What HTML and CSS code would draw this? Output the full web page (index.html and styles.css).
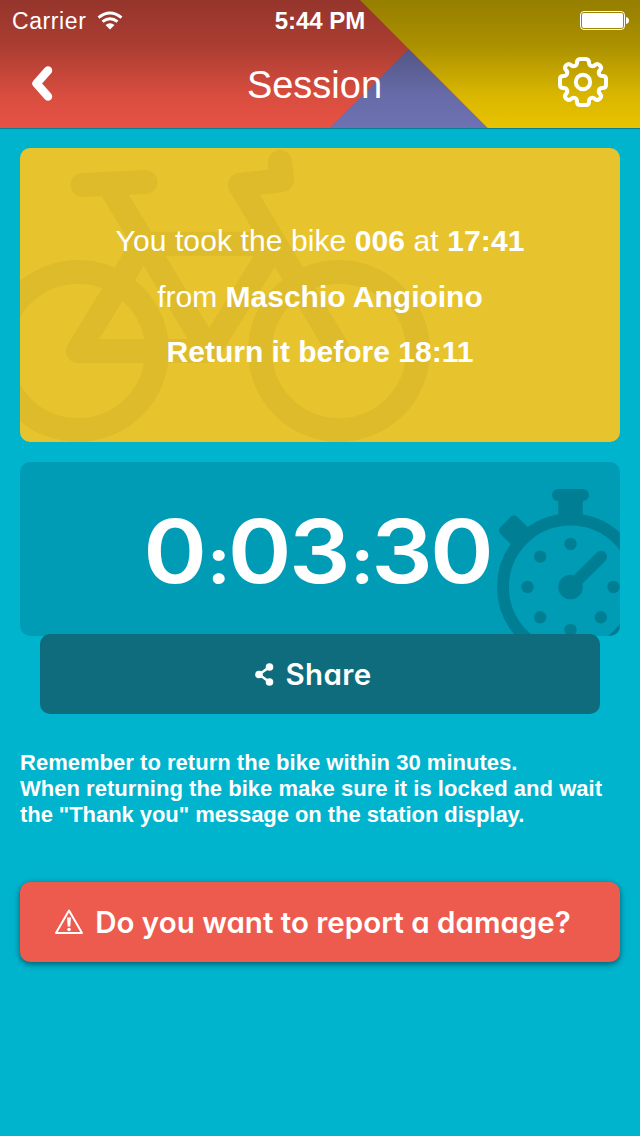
FILE: index.html
```html
<!DOCTYPE html>
<html lang="en">
    <head>
        <meta charset="UTF-8">
        <meta name="viewport" content="width=device-width, initial-scale=1.0">
        <title>Session</title>
        <link rel="stylesheet" href="styles.css">
    </head>
    <body>
        <header class="header">
            <svg class="header-bg" viewBox="0 0 640 128">
                <rect width="640" height="128" fill="#e95344"/>
                <path d="M360 0H640V128H487.500Z" fill="#eac500"/>
                <path d="M408.500 49L487.500 128H329.500Z" fill="#6f73b4"/>
            </svg>
            <div class="status-bar">
                <div class="carrier">
                    <span class="carrier-name">Carrier</span>
                    <svg class="wifi" width="26" height="19" viewBox="0 0 26 19">
                        <g fill="none" stroke="#fff" stroke-width="3">
                            <path d="M1.500 6.700Q13 -2.700 24.500 6.700"/>
                            <path d="M5.500 10.700Q13 4.700 20.500 10.700"/>
                        </g>
                        <path d="M8.500 14Q13 10.400 17.500 14L13 18.500Z" fill="#fff"/>
                    </svg>
                </div>
                <span class="clock">5:44 PM</span>
                <svg class="battery" width="50" height="20" viewBox="0 0 50 20">
                    <rect x="0.500" y="0.500" width="44" height="18" rx="3.500" fill="none" stroke="#fff"/>
                    <rect x="2" y="2" width="41" height="15" rx="2" fill="#fff"/>
                    <path d="M46 6Q49 6.500 49 9.500T46 13Z" fill="#fff"/>
                </svg>
            </div>
            <nav class="nav-bar">
                <svg class="back" width="26" height="40" viewBox="0 0 26 40">
                    <path d="M19 6.500L7.500 19.500L19 32.500" fill="none" stroke="#fff" stroke-width="8.500" stroke-linecap="round" stroke-linejoin="round"/>
                </svg>
                <h1 class="title">Session</h1>
                <svg class="gear" width="52" height="52" viewBox="-26 -26 52 52">
                    <g fill="none" stroke="#fff" stroke-width="4" stroke-linejoin="round">
                        <path d="M-3 -23H3Q6 -22.500 6 -19.500C6 -16 9.500 -14.500 12 -17Q14.200 -19 16.400 -17L17.400 -16Q19 -14 17 -12C14.500 -9.500 16 -6 19.500 -6Q23 -6 23 -3V3Q23 6 19.500 6C16 6 14.500 9.500 17 12Q19 14 17.400 16L16.400 17Q14.200 19 12 17C9.500 14.500 6 16 6 19.500Q6 23 3 23H-3Q-6 23 -6 19.500C-6 16 -9.500 14.500 -12 17Q-14.200 19 -16.400 17L-17.400 16Q-19 14 -17 12C-14.500 9.500 -16 6 -19.500 6Q-23 6 -23 3V-3Q-23 -6 -19.500 -6C-16 -6 -14.500 -9.500 -17 -12Q-19 -14 -17.400 -16L-16.400 -17Q-14.200 -19 -12 -17C-9.500 -14.500 -6 -16 -6 -19.500Q-6 -22.500 -3 -23Z"/>
                        <circle r="7.200"/>
                    </g>
                </svg>
            </nav>
        </header>
        <main class="content">
            <section class="card ride">
                <!-- bike -->
                <svg class="bike" viewBox="20 148 600 294">
                    <g fill="none" stroke="#ddbb2a" stroke-width="24" stroke-linecap="round" stroke-linejoin="round">
                        <circle cx="78" cy="351" r="79"/>
                        <circle cx="339" cy="351" r="79"/>
                        <path d="M82.500 185L145.500 182"/>
                        <path d="M109 185L209 351H78L143 243.700H275L209 351"/>
                        <path d="M280 162L282 180L240 185L339 351"/>
                    </g>
                </svg>
                <p class="line line-took">You took the bike <b>006</b> at <b>17:41</b></p>
                <p class="line line-from">from <b>Maschio Angioino</b></p>
                <p class="line line-return"><b>Return it before 18:11</b></p>
            </section>
            <section class="card timer">
                <!-- stopwatch -->
                <svg class="stopwatch" viewBox="20 462 600 174">
                    <g fill="#007f94" transform="translate(570.500 587)">
                        <circle r="67.500" fill="none" stroke="#007f94" stroke-width="12"/>
                        <rect x="-18.500" y="-98" width="37" height="12" rx="6"/>
                        <rect x="-12.300" y="-92" width="24.600" height="24"/>
                        <rect x="-12" y="-92" width="24" height="26" rx="5" transform="rotate(-45)"/>
                        <circle r="12.300"/>
                        <path d="M0 0L30.500 -30.300" stroke="#007f94" stroke-width="12" stroke-linecap="round"/>
                        <circle cy="-43" r="6.200"/>
                        <circle cx="43" r="6.200"/>
                        <circle cy="43" r="6.200"/>
                        <circle cx="-43" r="6.200"/>
                        <circle cx="-30.300" cy="-30.300" r="6.200"/>
                        <circle cx="-30.300" cy="30.300" r="6.200"/>
                        <circle cx="30.300" cy="30.300" r="6.200"/>
                    </g>
                </svg>
                <div class="time">0<span class="colon">:</span>03<span class="colon">:</span>30</div>
            </section>
            <button class="share">
                <svg width="19" height="23" viewBox="0 0 19 23">
                    <path d="M14.500 4L4 11.500L14.500 19" fill="none" stroke="#fff" stroke-width="2.500"/>
                    <g fill="#fff">
                        <circle cx="14.500" cy="4" r="3.800"/>
                        <circle cx="4" cy="11.500" r="3.800"/>
                        <circle cx="14.500" cy="19" r="3.800"/>
                    </g>
                </svg>
                <span class="share-text">Share</span>
            </button>
            <p class="note">
                <span class="note-1">Remember to return the bike within 30 minutes.</span><br>
                <span class="note-2">When returning the bike make sure it is locked and wait</span><br>
                <span class="note-3">the "Thank you" message on the station display.</span>
            </p>
            <button class="report">
                <svg width="30" height="26" viewBox="0 0 30 26">
                    <path d="M15 1.500L28 24H2Z" fill="none" stroke="#fff" stroke-width="2" stroke-linejoin="round"/>
                    <path d="M13 8.500H17L16.300 17.500H13.700Z" fill="#fff"/>
                    <circle cx="15" cy="20.500" r="1.800" fill="#fff"/>
                </svg>
                <span class="report-text">Do you want to report a damage?</span>
            </button>
        </main>
    </body>
</html>
```
FILE: styles.css
```css
* {
    box-sizing: border-box;
}

body {
    margin: 0;
    min-height: 1136px;
    background: #00b4ce;
    color: #fff;
    font-family: "Liberation Sans", Arial, sans-serif;
}

/* header */
.header {
    position: relative;
    height: 129px;
    border-bottom: 1px solid #008296;
}

.header-bg {
    position: absolute;
    top: 0;
    left: 0;
    width: 640px;
    height: 128px;
}

.header::before {
    content: "";
    position: absolute;
    z-index: 1;
    top: 0;
    left: 0;
    width: 100%;
    height: 128px;
    background: linear-gradient(rgba(0, 0, 0, 0.36), rgba(0, 0, 0, 0.27) 35%, rgba(0, 0, 0, 0.07) 75%, rgba(0, 0, 0, 0.01));
}

.status-bar, .nav-bar {
    position: relative;
    z-index: 2;
    display: grid;
    grid-template-columns: 1fr auto 1fr;
    align-items: center;
}

.status-bar {
    height: 40px;
    padding: 1px 10px 0 12px;
}

.carrier {
    display: flex;
    align-items: center;
    gap: 11px;
}

.carrier-name {
    padding-top: 1px;
    font-size: 23px;
    letter-spacing: 0.6px;
}

.clock {
    margin-right: 2px;
    font-weight: bold;
    font-size: 24px;
}

.battery, .gear {
    justify-self: end;
}

.nav-bar {
    height: 88px;
    padding: 0 31px 4px 29px;
}

.back {
    margin-top: 4px;
}

.title {
    margin: 7px 9px 0 0;
    font-weight: normal;
    font-size: 38px;
}

/* cards */
.content {
    display: flex;
    flex-direction: column;
    padding: 19px 20px 0;
}

.card {
    position: relative;
    display: flex;
    flex-direction: column;
    align-items: center;
    border-radius: 10px;
    overflow: hidden;
}

.ride {
    height: 294px;
    padding-top: 65px;
    background: #e7c42e;
}

.bike, .stopwatch {
    position: absolute;
    top: 0;
    left: 0;
    width: 100%;
    height: 100%;
}

.line {
    position: relative;
    margin: 0;
    font-size: 30px;
    line-height: 55.500px;
    white-space: nowrap;
}

.line-took {
    letter-spacing: 0.1px;
}

.line b {
    font-weight: 700;
}

.timer {
    height: 174px;
    margin-top: 20px;
    padding: 12px 6px 0 0;
    justify-content: center;
    background: #009cb6;
}

.time {
    position: relative;
    font-family: Inter, sans-serif;
    font-weight: 600;
    font-size: 88px;
    line-height: 100px;
    letter-spacing: -2.500px;
    font-feature-settings: "calt" 0;
    transform: scaleX(1.1);
}

.colon {
    margin-left: 2.500px;
    font-size: 64px;
    font-weight: 700;
}

button {
    display: flex;
    align-items: center;
    justify-content: center;
    height: 80px;
    padding: 0;
    border: 0;
    border-radius: 10px;
    color: #fff;
    font-family: Inter, sans-serif;
    font-weight: 600;
    font-size: 29.500px;
    font-feature-settings: "cv11";
}

.share {
    position: relative;
    margin: -2px 20px 0;
    padding-right: 13px;
    gap: 11px;
    background: #0f6c7c;
}

.share-text {
    letter-spacing: 0.4px;
}

.note {
    margin: 36px 0 0;
    font-weight: bold;
    font-size: 22px;
    line-height: 26px;
    letter-spacing: 0.025px;
    white-space: nowrap;
}

.note-3 {
    letter-spacing: -0.060px;
}

.report {
    margin-top: 54px;
    padding-right: 15px;
    gap: 11px;
    background: #ec5b4e;
    box-shadow: 0 2px 6px rgba(0, 0, 0, 0.5);
}

.report-text {
    white-space: nowrap;
}
```
